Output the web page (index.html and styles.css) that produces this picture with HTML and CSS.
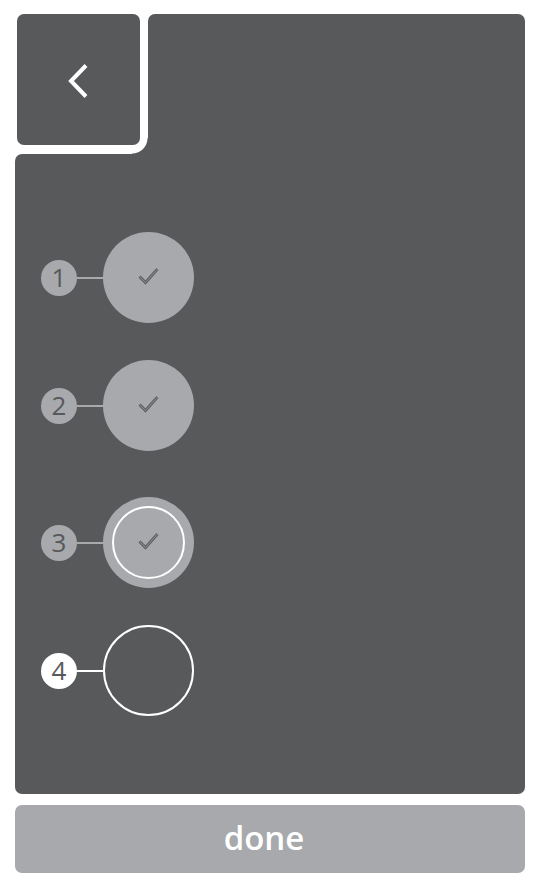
FILE: index.html
```html
<!DOCTYPE html>
<html lang="en">
<head>
<meta charset="utf-8">
<meta name="viewport" content="width=device-width, initial-scale=1">
<title>Steps</title>
<link rel="stylesheet" href="styles.css">
</head>
<body>
<main class="screen">
  <div class="top">
    <div class="notch">
      <button class="back" type="button" aria-label="Back">
        <svg class="chevron" viewBox="0 0 20 34" aria-hidden="true"><path d="M18 1.5 3 17 18 32.5"/></svg>
      </button>
    </div>
    <div class="top-fill"></div>
  </div>
  <section class="panel">
    <ol class="steps">
      <li class="step">
        <span class="number">1</span><span class="line"></span>
        <button class="circle" type="button" aria-label="Step 1">
          <svg class="check" viewBox="0 0 22 18" aria-hidden="true"><path class="check-edge" d="M1.5 9.5 7.5 15.5 19.5 2"/><path class="check-core" d="M1.5 9.5 7.5 15.5 19.5 2"/></svg>
        </button>
      </li>
      <li class="step">
        <span class="number">2</span><span class="line"></span>
        <button class="circle" type="button" aria-label="Step 2">
          <svg class="check" viewBox="0 0 22 18" aria-hidden="true"><path class="check-edge" d="M1.5 9.5 7.5 15.5 19.5 2"/><path class="check-core" d="M1.5 9.5 7.5 15.5 19.5 2"/></svg>
        </button>
      </li>
      <li class="step step-last-done">
        <span class="number">3</span><span class="line"></span>
        <button class="circle" type="button" aria-label="Step 3">
          <span class="ring">
            <svg class="check" viewBox="0 0 22 18" aria-hidden="true"><path class="check-edge" d="M1.5 9.5 7.5 15.5 19.5 2"/><path class="check-core" d="M1.5 9.5 7.5 15.5 19.5 2"/></svg>
          </span>
        </button>
      </li>
      <li class="step step-current">
        <span class="number">4</span><span class="line"></span>
        <button class="circle" type="button" aria-label="Step 4"></button>
      </li>
    </ol>
  </section>
  <button class="done" type="button">done</button>
</main>
</body>
</html>
```
FILE: styles.css
```css
:root {
  --dark: #58595b;
  --grey: #a7a9ac;
  --radius: 7px;
}

* {
  box-sizing: border-box;
}

body {
  margin: 0;
  background: #fff;
  font-family: "Open Sans", "Noto Sans", sans-serif;
}

button {
  margin: 0;
  padding: 0;
  border: 0;
  font: inherit;
  cursor: pointer;
}

.screen {
  display: flex;
  flex-direction: column;
  min-height: 100vh;
  padding: 14px 16px 15px 15px;
}

.top {
  display: flex;
}

/* The gradient fills the inner corner where the two dark areas meet. */
.notch {
  padding: 0 8px 9px 2px;
  background: radial-gradient(circle at 0 0, #fff 15px, var(--dark) 16px) no-repeat right bottom / 16px 16px;
}

.back {
  display: flex;
  align-items: center;
  justify-content: center;
  width: 123px;
  height: 131px;
  padding: 2px 2px 0 0;
  border-radius: var(--radius);
  background: var(--dark);
}

.chevron {
  width: 20px;
  height: 34px;
  fill: none;
  stroke: #fff;
  stroke-width: 4;
}

.top-fill {
  flex: 1;
  border-radius: var(--radius) var(--radius) 0 0;
  background: var(--dark);
}

.panel {
  flex: 1;
  padding: 78px 26px;
  border-radius: var(--radius) 0 var(--radius) var(--radius);
  background: var(--dark);
}

.steps {
  display: flex;
  flex-direction: column;
  gap: 37px;
  margin: 0;
  padding: 0;
  list-style: none;
}

.step {
  display: flex;
  align-items: center;
}

.step-last-done {
  margin-top: 9px;
}

.number {
  width: 36px;
  height: 36px;
  border-radius: 50%;
  background: var(--grey);
  color: var(--dark);
  font-size: 26px;
  line-height: 34px;
  text-align: center;
}

.line {
  width: 26px;
  height: 2px;
  background: var(--grey);
}

.circle {
  display: flex;
  align-items: center;
  justify-content: center;
  width: 91px;
  height: 91px;
  border-radius: 50%;
  background: var(--grey);
}

.ring {
  display: flex;
  align-items: center;
  justify-content: center;
  width: 73px;
  height: 73px;
  border: 2px solid #fff;
  border-radius: 50%;
}

.check {
  width: 22px;
  height: 18px;
  margin-bottom: 3px;
  fill: none;
}

.check-edge {
  stroke: #606163;
  stroke-width: 3;
}

.check-core {
  stroke: #8b8d90;
  stroke-width: 1;
}

.step-current .number,
.step-current .line {
  background: #fff;
}

.step-current .circle {
  border: 2px solid #fff;
  background: transparent;
}

.done {
  height: 68px;
  margin-top: 11px;
  padding: 0 12px 2px 0;
  border-radius: var(--radius);
  background: var(--grey);
  color: #fff;
  font-size: 33px;
  font-weight: 600;
  line-height: 66px;
}
```
